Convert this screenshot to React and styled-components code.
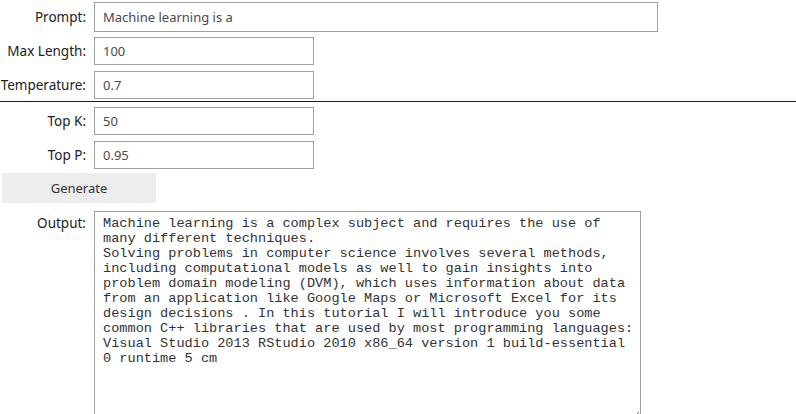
import React from "react";
import styled, { createGlobalStyle } from "styled-components";

const GlobalStyle = createGlobalStyle`
  html, body {
    margin: 0;
    padding: 0;
    overflow: hidden;
    background: #fff;
  }
  body {
    font-family: "Segoe UI", "Noto Sans", "Open Sans", sans-serif;
  }
`;

const Page = styled.div`
  display: flex;
  flex-direction: column;
  padding-top: 2px;
`;

const Row = styled.div`
  display: flex;
  align-items: ${(p) => (p.$top ? "flex-start" : "center")};
  gap: 8px;
  margin-bottom: ${(p) => p.$mb || 6}px;
`;

const Label = styled.label`
  width: 86px;
  flex: none;
  text-align: right;
  font-size: 13.5px;
  color: #222;
  white-space: nowrap;
  padding-top: ${(p) => (p.$top ? 3 : 0)}px;
`;

const Input = styled.input`
  box-sizing: border-box;
  width: ${(p) => p.$w}px;
  height: ${(p) => p.$h || 28}px;
  border: 1px solid #a0a0a0;
  padding: 0 8px;
  margin: 0;
  font-family: "Segoe UI", "Noto Sans", "Open Sans", sans-serif;
  font-size: 13px;
  color: #4a4a4a;
  background: #fff;
  outline: none;
`;

const Rule = styled.hr`
  border: none;
  border-top: 1px solid #1a1a1a;
  margin: 0 0 1px 0;
  position: relative;
  top: -4px;
`;

const Button = styled.button`
  box-sizing: border-box;
  width: 154px;
  height: 30px;
  margin: 0 0 8px 2px;
  border: none;
  background: #ededed;
  color: #333;
  font-family: "Segoe UI", "Noto Sans", "Open Sans", sans-serif;
  font-size: 13px;
  cursor: pointer;
`;

const Output = styled.textarea`
  box-sizing: border-box;
  width: 547px;
  height: 210px;
  border: 1px solid #a0a0a0;
  padding: 4px 4px 4px 8px;
  margin: 0;
  font-family: "Liberation Mono", "Courier New", monospace;
  font-size: 13.6px;
  line-height: 15px;
  color: #333;
  background: #fff;
  outline: none;
`;

const outputText = [
  "Machine learning is a complex subject and requires the use of",
  "many different techniques.",
  "Solving problems in computer science involves several methods,",
  "including computational models as well to gain insights into",
  "problem domain modeling (DVM), which uses information about data",
  "from an application like Google Maps or Microsoft Excel for its",
  "design decisions . In this tutorial I will introduce you some",
  "common C++ libraries that are used by most programming languages:",
  "Visual Studio 2013 RStudio 2010 x86_64 version 1 build-essential",
  "0 runtime 5 cm",
].join("\n");

export default function App() {
  return (
    <>
      <GlobalStyle />
      <Page>
        <Row $mb={5}>
          <Label>Prompt:</Label>
          <Input $w={564} $h={30} defaultValue="Machine learning is a" />
        </Row>
        <Row>
          <Label>Max Length:</Label>
          <Input $w={220} defaultValue="100" />
        </Row>
        <Row>
          <Label>Temperature:</Label>
          <Input $w={220} defaultValue="0.7" />
        </Row>
        <Rule />
        <Row>
          <Label>Top K:</Label>
          <Input $w={220} defaultValue="50" />
        </Row>
        <Row $mb={4}>
          <Label>Top P:</Label>
          <Input $w={220} defaultValue="0.95" />
        </Row>
        <Button>Generate</Button>
        <Row $top>
          <Label $top>Output:</Label>
          <Output defaultValue={outputText} />
        </Row>
      </Page>
    </>
  );
}
